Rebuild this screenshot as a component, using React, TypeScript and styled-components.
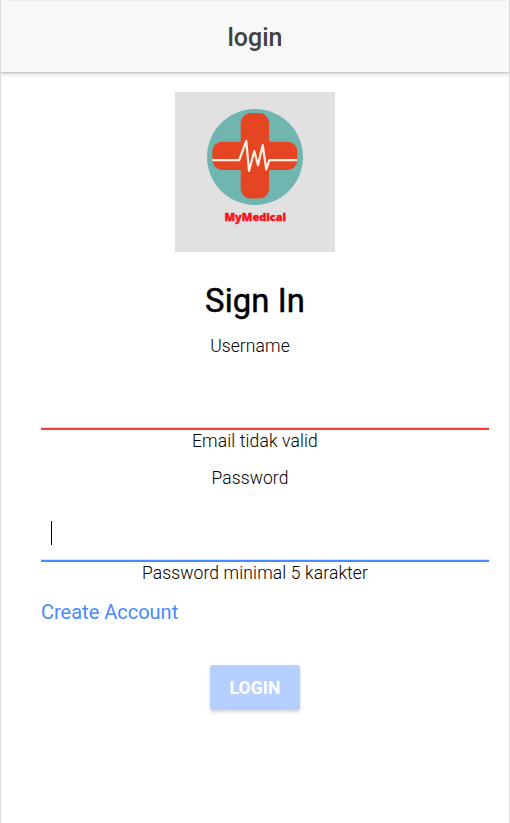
import React from "react";
import styled, { createGlobalStyle } from "styled-components";

const GlobalStyle = createGlobalStyle`
  * { box-sizing: border-box; }
  body { margin: 0; background: #fff; font-family: Roboto, sans-serif; color: #000; }
`;

const Page = styled.div`
  height: 823px;
  overflow: hidden;
  border: 1px solid #dcdcdc;
  border-top-color: #f0f0f0;
  border-bottom: 0;
  background: #fff;
`;

const Toolbar = styled.header`
  height: 71px;
  padding-top: 2px;
  display: flex;
  align-items: center;
  justify-content: center;
  background: #f8f8f8;
  box-shadow: 0 1px 1px rgba(0, 0, 0, 0.08), 0 2px 4px rgba(0, 0, 0, 0.2);
`;

const Title = styled.h1`
  margin: 0;
  font-size: 25px;
  line-height: 30px;
  font-weight: 500;
  color: #424242;
`;

const Content = styled.main`
  padding: 20px 20px 0 40px;
  display: flex;
  flex-direction: column;
`;

const Logo = styled.svg`
  width: 160px;
  height: 160px;
  margin-left: 134px;
  background: #e1e1e1;
`;

const Heading = styled.h2`
  margin: 29px 20px 0 0;
  font-size: 32.8px;
  line-height: 40px;
  font-weight: 400;
  letter-spacing: 0.1px;
  -webkit-text-stroke: 0.5px #000;
  text-align: center;
`;

const Label = styled.label<{ $gap: number }>`
  margin: ${(p) => p.$gap}px 30px 0 0;
  font-size: 17.5px;
  line-height: 22px;
  font-weight: 300;
  letter-spacing: 0.1px;
  text-align: center;
`;

const Field = styled.div<{ $line: string; $edge: string }>`
  height: 73px;
  padding: 32px 10px 0;
  border-bottom: 2px solid ${(p) => p.$line};
  box-shadow: inset 0 -1px ${(p) => p.$edge};
`;

const Caret = styled.div`
  width: 1px;
  height: 24px;
  background: #000;
`;

const Hint = styled.p`
  margin: 0 20px 0 0;
  font-size: 17.5px;
  line-height: 22px;
  font-weight: 300;
  letter-spacing: 0.13px;
  text-align: center;
`;

const Link = styled.a`
  margin-top: 16px;
  align-self: flex-start;
  font-size: 20px;
  line-height: 24px;
  color: #488aff;
`;

const Button = styled.button`
  width: 90px;
  height: 45px;
  margin: 41px 0 0 169px;
  padding: 1px 0 0;
  border: 0;
  border-radius: 3px;
  background: #b5d0ff;
  color: #fff;
  font: 700 17.5px/22px Roboto, sans-serif;
  letter-spacing: 0.1px;
  box-shadow: 0 2px 3px rgba(0, 0, 0, 0.1), 0 3px 5px rgba(0, 0, 0, 0.06);
`;

export default function App() {
  return (
    <>
      <GlobalStyle />
      <Page>
        <Toolbar>
          <Title>login</Title>
        </Toolbar>
        <Content>
          <Logo viewBox="0 0 160 160" role="img" aria-label="MyMedical">
            <circle cx="80" cy="65" r="48" fill="#70b5b0" />
            <rect x="65.7" y="21" width="28.4" height="85.6" rx="10" fill="#e64524" />
            <rect x="37.5" y="49.7" width="84.8" height="28.2" rx="9.5" fill="#e64524" />
            <polyline
              points="37.5,68.2 64.2,68.2 71.3,49 74,79 79.3,59 83,73.3 87.7,53 91.3,77.5 94.3,68.2 122.3,68.2"
              fill="none"
              stroke="#fbf1e0"
              strokeWidth="2.2"
              strokeLinejoin="round"
            />
            <text
              x="80.3"
              y="128.7"
              textAnchor="middle"
              textLength="61.6"
              lengthAdjust="spacingAndGlyphs"
              fill="#fb1018"
              fontFamily="'Open Sans', sans-serif"
              fontSize="10.6"
              fontWeight="800"
              stroke="#fb1018"
              strokeWidth="0.35"
            >
              MyMedical
            </text>
          </Logo>
          <Heading>Sign In</Heading>
          <Label $gap={14}>Username</Label>
          <Field $line="#f53d3d" $edge="#fccfcf" />
          <Hint>Email tidak valid</Hint>
          <Label $gap={15}>Password</Label>
          <Field $line="#488aff" $edge="#d1e2ff">
            <Caret />
          </Field>
          <Hint>Password minimal 5 karakter</Hint>
          <Link>Create Account</Link>
          <Button>LOGIN</Button>
        </Content>
      </Page>
    </>
  );
}
